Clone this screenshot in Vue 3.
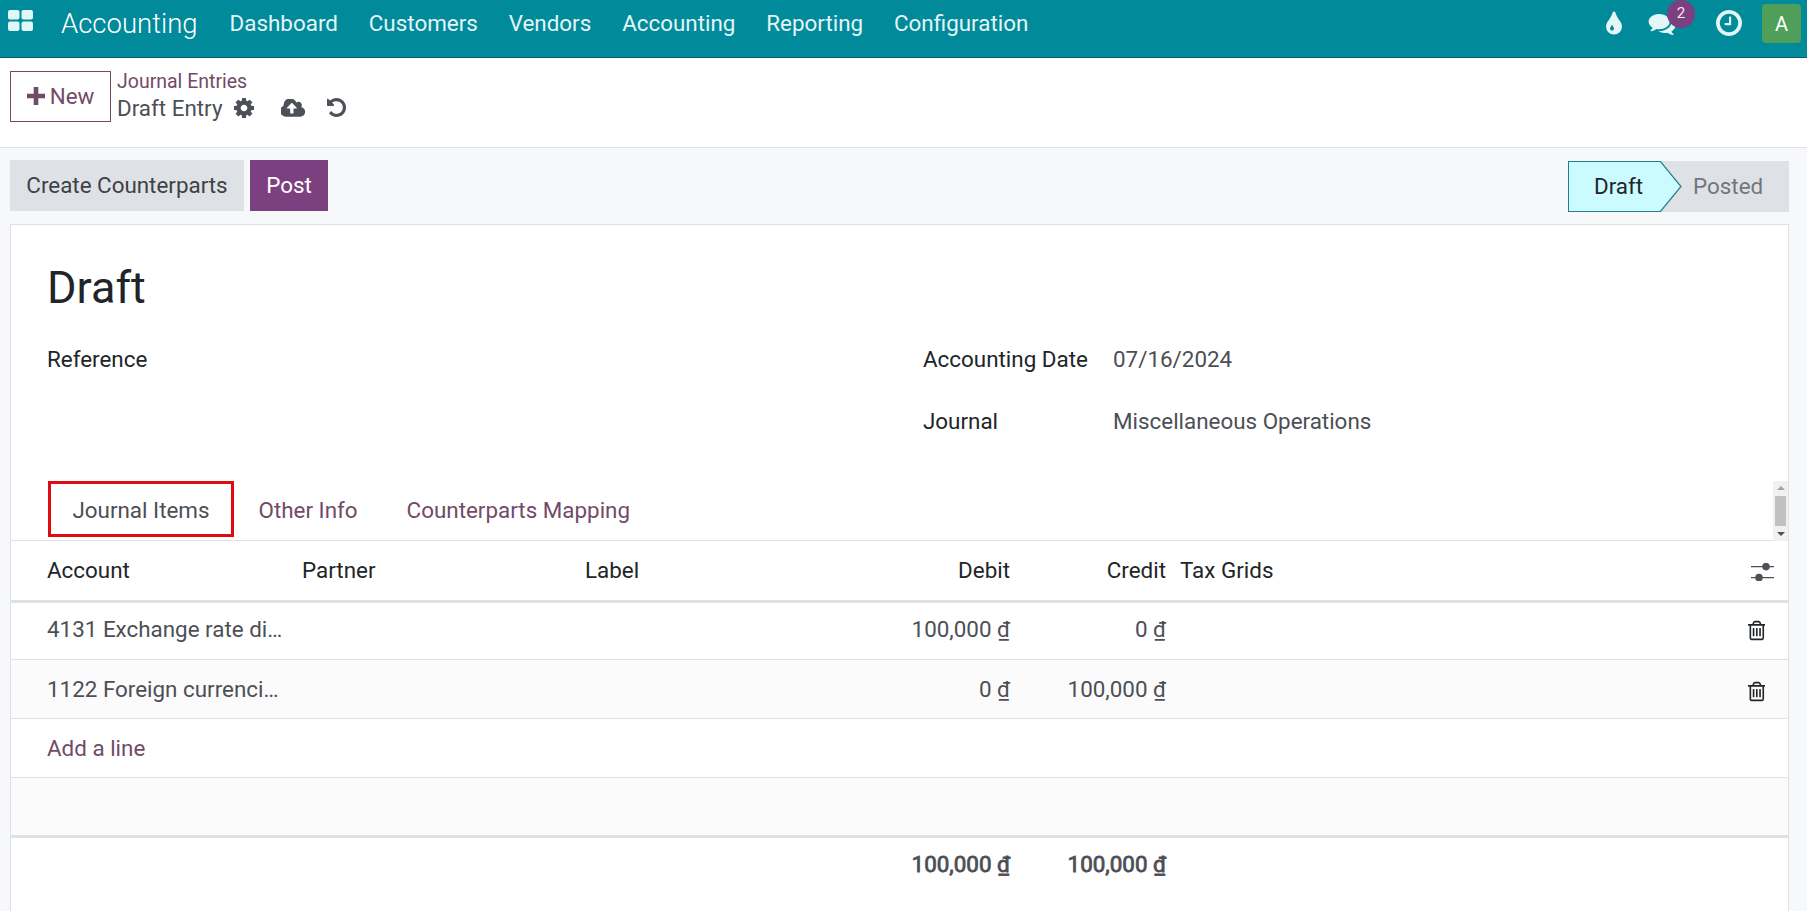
<script setup>
const menus = ['Dashboard', 'Customers', 'Vendors', 'Accounting', 'Reporting', 'Configuration']
const lines = [
  { account: '4131 Exchange rate difference loss', debit: '100,000', credit: '0' },
  { account: '1122 Foreign currencies in bank', debit: '0', credit: '100,000' }
]
const trash = 'M704 736v576q0 14-9 23t-23 9h-64q-14 0-23-9t-9-23v-576q0-14 9-23t23-9h64q14 0 23 9t9 23zm256 0v576q0 14-9 23t-23 9h-64q-14 0-23-9t-9-23v-576q0-14 9-23t23-9h64q14 0 23 9t9 23zm256 0v576q0 14-9 23t-23 9h-64q-14 0-23-9t-9-23v-576q0-14 9-23t23-9h64q14 0 23 9t9 23zm128 724v-948h-896v948q0 22 7 40.5t14.5 27 10.5 8.5h832q3 0 10.5-8.5t14.5-27 7-40.5zm-672-1076h448l-48-117q-7-9-17-11h-317q-10 2-17 11zm928 32v64q0 14-9 23t-23 9h-96v948q0 83-47 143.5t-113 60.5h-832q-66 0-113-58.5t-47-141.5v-952h-96q-14 0-23-9t-9-23v-64q0-14 9-23t23-9h309l70-167q15-37 54-63t79-26h320q40 0 79 26t54 63l70 167h309q14 0 23 9t9 23z'
</script>

<template>
  <div class="page">
    <header class="navbar">
      <svg class="apps" viewBox="0 0 25 21">
        <rect x="0" y="0" width="11.5" height="9.5" rx="2" />
        <rect x="13.5" y="0" width="11.5" height="9.5" rx="2" />
        <rect x="0" y="11.5" width="11.5" height="9.5" rx="2" />
        <rect x="13.5" y="11.5" width="11.5" height="9.5" rx="2" />
      </svg>
      <span class="brand">Accounting</span>
      <nav class="menu">
        <a v-for="m in menus" :key="m">{{ m }}</a>
      </nav>
      <div class="systray">
        <svg class="drop" viewBox="256 64 1152 1472"><path d="M896 1152q0-36-20-69-1-1-15.5-22.5t-25.5-38-25-44-21-50.5q-4-16-21-16t-21 16q-7 23-21 50.5t-25 44-25.5 38-15.5 22.5q-20 33-20 69 0 53 37.5 90.5t90.5 37.5 90.5-37.5 37.5-90.5zm512-128q0 212-150 362t-362 150-362-150-150-362q0-145 81-275 6-9 62.5-90.5t101-151 99.5-178 83-201.5q9-30 34-47t51-17 51.5 17 33.5 47q28 93 83 201.5t99.5 178 101 151 62.5 90.5q81 127 81 275z" /></svg>
        <div class="chat">
          <svg viewBox="0 128 1792 1536"><path d="M1408 768q0 139-94 257t-256.5 186.5-353.5 68.5q-86 0-176-16-124 88-278 128-36 9-86 16h-3q-11 0-20.5-8t-11.5-21q-1-3-1-6.5t.5-6.5 2-6l2.5-5 3.5-5.5 4-5 4.5-5 4-4.5q5-6 23-25t26-29.5 22.5-29 25-38.5 20.5-44q-124-72-195-177t-71-224q0-139 94-257t256.5-186.5 353.5-68.5 353.5 68.5 256.5 186.5 94 257zm384 256q0 120-71 224.5t-195 176.5q10 24 20.5 44t25 38.5 22.5 29 26 29.5 23 25q1 1 4 4.5t4.5 5 4 5 3.5 5.5l2.5 5 2 6 .5 6.5-1 6.5q-3 14-13 22t-22 7q-50-7-86-16-154-40-278-128-90 16-176 16-271 0-472-132 58 4 88 4 161 0 309-45t264-129q125-92 192-212t67-254q0-77-23-152 129 71 204 178t75 230z" /></svg>
          <span class="badge">2</span>
        </div>
        <svg class="clock" viewBox="128 128 1536 1536"><path d="M1024 544v448q0 14-9 23t-23 9h-320q-14 0-23-9t-9-23v-64q0-14 9-23t23-9h224v-352q0-14 9-23t23-9h64q14 0 23 9t9 23zm416 352q0-148-73-273t-198-198-273-73-273 73-198 198-73 273 73 273 198 198 273 73 273-73 198-198 73-273zm224 0q0 209-103 385.5t-279.5 279.5-385.5 103-385.5-103-279.5-279.5-103-385.5 103-385.5 279.5-279.5 385.5-103 385.5 103 279.5 279.5 103 385.5z" /></svg>
        <span class="avatar">A</span>
      </div>
    </header>

    <div class="control-panel">
      <button class="btn-new">
        <svg viewBox="0 0 18 18"><path d="M6.7 0h4.6v6.7H18v4.6h-6.7V18H6.7v-6.7H0V6.7h6.7z" /></svg>
        New
      </button>
      <div class="crumbs">
        <a class="crumb-link">Journal Entries</a>
        <div class="crumb-current">
          <span>Draft Entry</span>
          <svg class="ic-gear" viewBox="128 128 1536 1536"><path d="M1152 896q0-106-75-181t-181-75-181 75-75 181 75 181 181 75 181-75 75-181zm512-109v222q0 12-8 23t-20 13l-185 28q-19 54-39 91 35 50 107 138 10 12 10 25t-9 23q-27 37-99 108t-94 71q-12 0-26-9l-138-108q-44 23-91 38-16 136-29 186-7 28-36 28h-222q-14 0-24.5-8.5t-11.5-21.5l-28-184q-49-16-90-37l-141 107q-10 9-25 9-14 0-25-11-126-114-165-168-7-10-7-23 0-12 8-23 15-21 51-66.5t54-70.5q-27-50-41-99l-183-27q-13-2-21-12.5t-8-23.5v-222q0-12 8-23t19-13l186-28q14-46 39-92-40-57-107-138-10-12-10-24 0-10 9-23 26-36 98.5-107.5t94.5-71.5q13 0 26 10l138 107q44-23 91-38 16-136 29-186 7-28 36-28h222q14 0 24.5 8.5t11.5 21.5l28 184q49 16 90 37l142-107q9-9 24-9 13 0 25 10 129 119 165 170 7 8 7 22 0 12-8 23-15 21-51 66.5t-54 70.5q26 50 41 98l183 28q13 2 21 12.5t8 23.5z" /></svg>
          <svg class="ic-cloud" viewBox="0 192 1920 1344"><path d="M1216 864q0-14-9-23l-352-352q-9-9-23-9t-23 9l-351 351q-10 12-10 24 0 14 9 23t23 9h224v352q0 13 9.5 22.5t22.5 9.5h192q13 0 22.5-9.5t9.5-22.5v-352h224q13 0 22.5-9.5t9.5-22.5zm640 288q0 159-112.5 271.5t-271.5 112.5h-1088q-185 0-316.5-131.5t-131.5-316.5q0-130 70-240t188-165q-2-30-2-43 0-212 150-362t362-150q156 0 285.5 87t188.5 231q71-62 166-62 106 0 181 75t75 181q0 76-41 138 130 31 213.5 135.5t83.5 238.5z" /></svg>
          <svg class="ic-undo" viewBox="128 128 1536 1536"><path d="M1664 896q0 156-61 298t-164 245-245 164-298 61q-172 0-327-72.5t-264-204.5q-7-10-6.5-22.5t8.5-20.5l137-138q10-9 25-9 16 2 23 12 73 95 179 147t225 52q104 0 198.5-40.5t163.5-109.5 109.5-163.5 40.5-198.5-40.5-198.5-109.5-163.5-163.5-109.5-198.5-40.5q-98 0-188 35.5t-160 101.5l137 138q31 30 14 69-17 40-59 40h-448q-26 0-45-19t-19-45v-448q0-42 40-59 39-17 69 14l130 129q107-101 244.5-156.5t284.5-55.5q156 0 298 61t245 164 164 245 61 298z" /></svg>
        </div>
      </div>
    </div>

    <div class="content">
      <div class="statusbar">
        <div class="actions">
          <button class="btn-grey">Create Counterparts</button>
          <button class="btn-post">Post</button>
        </div>
        <div class="stages">
          <span class="stage-draft">
            Draft
            <svg class="chevron" viewBox="0 0 22 51"><polygon points="0,0.5 21,25.5 0,50.5" /><polyline points="0,0 21,25.5 0,51" /></svg>
          </span>
          <span class="stage-posted">Posted</span>
        </div>
      </div>

      <div class="sheet">
        <h1 class="title">Draft</h1>
        <div class="form-grid">
          <div class="field"><label>Reference</label></div>
          <div>
            <div class="field"><label>Accounting Date</label><span>07/16/2024</span></div>
            <div class="field"><label>Journal</label><span>Miscellaneous Operations</span></div>
          </div>
        </div>

        <div class="tabs">
          <a class="tab active">Journal Items</a>
          <a class="tab">Other Info</a>
          <a class="tab">Counterparts Mapping</a>
          <div class="scroll">
            <i class="arrow up"></i>
            <i class="thumb"></i>
            <i class="arrow down"></i>
          </div>
        </div>

        <table class="items">
          <colgroup>
            <col style="width: 283px" />
            <col style="width: 283px" />
            <col style="width: 285px" />
            <col style="width: 156px" />
            <col style="width: 156px" />
            <col />
            <col style="width: 62px" />
          </colgroup>
          <thead>
            <tr>
              <th class="first">Account</th>
              <th>Partner</th>
              <th>Label</th>
              <th class="num">Debit</th>
              <th class="num">Credit</th>
              <th class="tax">Tax Grids</th>
              <th class="opt">
                <svg viewBox="0 0 23 18"><path d="M0 3h23v1.300H0zM0 14h23v1.300H0z" /><circle cx="15" cy="3.600" r="3.800" /><circle cx="8" cy="14.600" r="3.800" /></svg>
              </th>
            </tr>
          </thead>
          <tbody>
            <tr v-for="(line, i) in lines" :key="line.account" :class="{ odd: i % 2 === 1 }">
              <td class="first"><div class="clip">{{ line.account }}</div></td>
              <td></td>
              <td></td>
              <td class="num">{{ line.debit }} <span class="cur">₫</span></td>
              <td class="num">{{ line.credit }} <span class="cur">₫</span></td>
              <td></td>
              <td class="del"><svg viewBox="128 64 1408 1664"><path :d="trash" /></svg></td>
            </tr>
            <tr>
              <td class="first" colspan="7"><a class="add">Add a line</a></td>
            </tr>
            <tr class="odd empty"><td colspan="7"></td></tr>
          </tbody>
          <tfoot>
            <tr>
              <td colspan="3"></td>
              <td class="num">100,000 <span class="cur">₫</span></td>
              <td class="num">100,000 <span class="cur">₫</span></td>
              <td colspan="2"></td>
            </tr>
          </tfoot>
        </table>
      </div>
    </div>
  </div>
</template>

<style>
html, body {
  margin: 0;
  height: 100%;
  overflow: hidden;
  background: #f7f8fa;
}
</style>

<style scoped>
.page {
  height: 911px;
  display: flex;
  flex-direction: column;
  overflow: hidden;
  font-family: Roboto, "Liberation Sans", sans-serif;
  font-size: 22.4px;
  color: #4c4f56;
}

.navbar {
  height: 57px;
  flex: none;
  display: flex;
  align-items: center;
  background: #008a9a;
  border-bottom: 1px solid #005f6b;
  color: #e3f5f7;
}

.apps {
  width: 25px;
  height: 21px;
  margin: -17px 0 0 8px;
  fill: #e0f7f8;
}

.brand {
  margin-left: 28px;
  font-size: 27.5px;
  font-weight: 300;
  color: #fff;
  margin-top: -11px;
}

.menu {
  display: flex;
  gap: 30.9px;
  margin-left: 32px;
  margin-top: -11px;
}

.systray {
  margin-left: auto;
  display: flex;
  align-items: center;
  padding-right: 6px;
  margin-top: -11px;
}

.drop {
  width: 18px;
  height: 24px;
  fill: #e3f7f8;
}

.chat {
  position: relative;
  margin-left: 25px;
  height: 23px;
}

.chat svg {
  width: 30px;
  height: 23px;
  display: block;
  fill: #e3f7f8;
}

.badge {
  position: absolute;
  left: 20px;
  top: -12px;
  width: 28px;
  height: 28px;
  border-radius: 50%;
  background: #7c3f80;
  color: #f5e9f5;
  font-size: 15px;
  line-height: 26px;
  text-align: center;
}

.clock {
  width: 26px;
  height: 26px;
  margin-left: 39px;
  fill: #e3f7f8;
}

.avatar {
  width: 39px;
  height: 39px;
  margin-left: 20px;
  border-radius: 4px;
  background: #4f9f5a;
  color: #fff;
  font-size: 20px;
  line-height: 40px;
  text-align: center;
}

.control-panel {
  height: 90px;
  flex: none;
  box-sizing: border-box;
  display: flex;
  align-items: flex-start;
  padding: 13px 10px 0;
  background: #fff;
  border-bottom: 1px solid #dee2e6;
}

.btn-new {
  width: 101px;
  height: 51px;
  display: flex;
  align-items: center;
  justify-content: center;
  gap: 5px;
  padding: 0 0 2px;
  background: #fff;
  border: 1px solid #714b67;
  color: #714b67;
  font: inherit;
  font-size: 22.4px;
}

.btn-new svg {
  width: 18px;
  height: 18px;
  fill: #714b67;
}

.crumbs {
  margin-left: 6px;
  margin-top: -1px;
}

.crumb-link {
  display: block;
  color: #714b67;
  font-size: 19.5px;
  line-height: 24px;
}

.crumb-current {
  display: flex;
  align-items: center;
  height: 27px;
  font-size: 22.4px;
}

.crumb-current svg {
  fill: #4c5159;
}

.ic-gear {
  width: 20px;
  height: 20px;
  margin-left: 12px;
}

.ic-cloud {
  width: 25px;
  height: 18px;
  margin-left: 27px;
}

.ic-undo {
  width: 19px;
  height: 19px;
  margin-left: 21px;
}

.content {
  flex: 1;
  padding: 0 18px 0 10px;
}

.statusbar {
  display: flex;
  justify-content: space-between;
  padding: 12px 0 12px;
}

.actions {
  display: flex;
  gap: 6px;
}

.btn-grey,
.btn-post {
  height: 51px;
  padding: 0 0 2px;
  border: none;
  font: inherit;
}

.btn-grey {
  width: 234px;
  background: #dee2e6;
  color: #3e4147;
}

.btn-post {
  width: 78px;
  background: #7c3f80;
  color: #fff;
}

.stages {
  display: flex;
  height: 51px;
  margin-top: 1px;
}

.stage-draft {
  position: relative;
  z-index: 1;
  width: 92px;
  box-sizing: border-box;
  padding-left: 25px;
  line-height: 49px;
  color: #21262b;
  background: #ccfbff;
  border: 1px solid #1f7f8b;
  border-right: none;
}

.chevron {
  position: absolute;
  left: 91px;
  top: -1px;
  width: 22px;
  height: 51px;
}

.chevron polygon {
  fill: #ccfbff;
}

.chevron polyline {
  fill: none;
  stroke: #1f7f8b;
  stroke-width: 1.2;
}

.stage-posted {
  width: 129px;
  box-sizing: border-box;
  padding-left: 33px;
  line-height: 51px;
  background: #dee2e6;
  color: #73767b;
}

.sheet {
  background: #fff;
  border: 1px solid #dee2e6;
  min-height: 700px;
}

.title {
  margin: 0;
  padding: 33px 0 0 36px;
  font-size: 45px;
  font-weight: 400;
  line-height: 60px;
  color: #212529;
}

.form-grid {
  display: grid;
  grid-template-columns: 876px 1fr;
  padding: 10px 0 0 36px;
  height: 163px;
  box-sizing: border-box;
}

.field {
  display: flex;
  height: 62px;
  line-height: 62px;
}

.field label {
  width: 190px;
  color: #212529;
}

.tabs {
  display: flex;
  align-items: stretch;
  height: 59px;
  padding-left: 37px;
  border-bottom: 1px solid #dee2e6;
}

.tab {
  display: flex;
  align-items: center;
  padding: 2px 24.5px 0;
  color: #714b67;
  height: 56px;
  box-sizing: border-box;
}

.tab.active {
  width: 186px;
  justify-content: center;
  padding: 2px 0 0;
  border: 3px solid #e00a13;
  color: #4c4f56;
}

.scroll {
  margin-left: auto;
  width: 15px;
  height: 60px;
  background: #f1f1f1;
  display: flex;
  flex-direction: column;
  align-items: center;
  justify-content: space-between;
  padding: 5px 0;
  box-sizing: border-box;
}

.arrow {
  width: 0;
  height: 0;
  border-left: 4px solid transparent;
  border-right: 4px solid transparent;
}

.arrow.up {
  border-bottom: 4px solid #a3a3a3;
}

.arrow.down {
  border-top: 4px solid #505050;
}

.thumb {
  width: 11px;
  height: 30px;
  background: #c1c1c1;
}

.items {
  width: 100%;
  border-collapse: separate;
  border-spacing: 0;
  table-layout: fixed;
}

.items th {
  height: 58px;
  padding: 0 8px 1px;
  font-weight: 400;
  text-align: left;
  color: #212529;
  border-bottom: 3px solid #dee2e6;
}

.items .tax {
  padding-left: 6px;
}

.items td {
  height: 58px;
  padding: 0 8px;
  border-bottom: 1px solid #dee2e6;
}

.items tbody tr:first-child td {
  height: 51px;
  padding-bottom: 5px;
}

.items .first {
  padding-left: 36px;
}

.items .num {
  text-align: right;
}

.clip {
  overflow: hidden;
  white-space: nowrap;
  text-overflow: ellipsis;
}

.items .opt,
.items .del {
  text-align: right;
  padding-right: 0;
}

.opt svg {
  width: 23px;
  height: 18px;
  fill: #4c5159;
  margin-right: 14px;
  vertical-align: middle;
}

.del svg {
  width: 18px;
  height: 21px;
  fill: #212529;
  margin-right: 23px;
  vertical-align: middle;
}

.odd td {
  background: #fbfbfb;
}

.items .empty td {
  height: 57px;
  border-bottom: 3px solid #dee2e6;
}

.cur {
  text-decoration: underline;
}

.add {
  color: #714b67;
}

.items tfoot td {
  height: 52px;
  border-bottom: none;
  -webkit-text-stroke: 0.8px currentColor;
}
</style>
